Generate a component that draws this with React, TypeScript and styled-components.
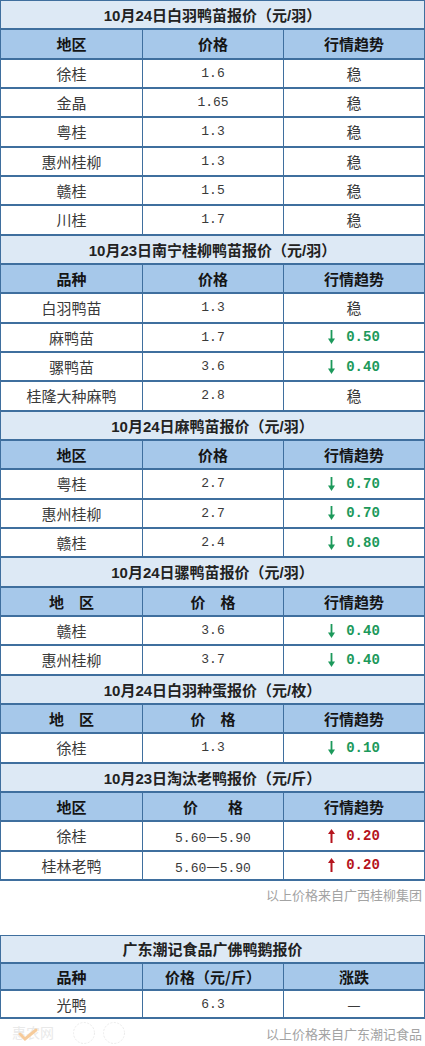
import React from 'react';
import styled, { createGlobalStyle } from 'styled-components';

const LINE = '#3f6f9e';

const GlobalStyle = createGlobalStyle`
  html, body {
    margin: 0;
    padding: 0;
    background: #ffffff;
  }
  body {
    font-family: "Noto Sans CJK SC", sans-serif;
    width: 425px;
  }
`;

const Page = styled.div`
  width: 425px;
  display: flex;
  flex-direction: column;
`;

const Table = styled.div<{ $rowH: number }>`
  --row-h: ${p => p.$rowH}px;
  width: 425px;
  box-sizing: border-box;
  border-top: 1px solid ${LINE};
  border-left: 1px solid ${LINE};
  border-right: 1px solid ${LINE};
`;

const TitleRow = styled.div`
  height: var(--row-h);
  box-sizing: border-box;
  border-bottom: 2px solid ${LINE};
  background: #dde9f5;
  display: flex;
  align-items: center;
  justify-content: center;
  font-family: "Liberation Sans", "Noto Sans CJK SC", sans-serif;
  font-weight: 700;
  font-size: 15px;
  color: #222;
`;

const Row = styled.div<{ head?: boolean }>`
  height: var(--row-h);
  box-sizing: border-box;
  border-bottom: 2px solid ${LINE};
  display: grid;
  grid-template-columns: 1fr 1fr 1fr;
  background: ${p => (p.head ? '#a6c8ea' : '#ffffff')};
  font-weight: ${p => (p.head ? 700 : 400)};
  color: ${p => (p.head ? '#151515' : '#3a3a3a')};
`;

const Cell = styled.div`
  display: flex;
  align-items: center;
  justify-content: center;
  font-size: 15px;
  white-space: pre;
  & + & {
    border-left: 1px solid ${LINE};
  }
`;

const Num = styled.span`
  font-family: "Liberation Mono", monospace;
  font-size: 13px;
`;

const Dash = styled.span`
  font-family: "Noto Sans CJK SC", sans-serif;
  font-size: 15px;
`;

const Trend = styled.span<{ up?: boolean }>`
  display: inline-flex;
  align-items: center;
  gap: 11px;
  color: ${p => (p.up ? '#b5141d' : '#1c995b')};
  font-family: "Liberation Mono", monospace;
  font-weight: 700;
  font-size: 14px;
`;

const Caption = styled.div<{ tall?: boolean }>`
  height: 28px;
  display: flex;
  align-items: center;
  justify-content: space-between;
  padding-right: 3px;
  margin-bottom: ${p => (p.tall ? '26px' : '0')};
  font-size: 13px;
  color: #a3a3a3;
`;

const CaptionText = styled.span`
  margin-left: auto;
`;

const Mark = styled.div`
  display: flex;
  align-items: center;
  gap: 6px;
  padding-left: 12px;
  opacity: 0.55;
`;

type Trendy = string | { dir: 'up' | 'down'; v: string };
type Section = { title: string; head: string[]; rows: [string, React.ReactNode, Trendy][] };

const Arrow = ({ up }: { up?: boolean }) => (
  <svg width="7" height="14" viewBox="0 0 7 14">
    {up ? (
      <>
        <path d="M3.5 0 L7 5 L0 5 Z" fill="currentColor" />
        <rect x="2.5" y="4" width="2" height="10" fill="currentColor" />
      </>
    ) : (
      <>
        <rect x="2.6" y="0" width="1.8" height="10" fill="currentColor" />
        <path d="M3.5 14 L7 8.5 L0 8.5 Z" fill="currentColor" />
      </>
    )}
  </svg>
);

const range = (
  <Num>
    5.60<Dash>—</Dash>5.90
  </Num>
);

const sections: Section[] = [
  {
    title: '10月24日白羽鸭苗报价（元/羽）',
    head: ['地区', '价格', '行情趋势'],
    rows: [
      ['徐桂', '1.6', '稳'],
      ['金晶', '1.65', '稳'],
      ['粤桂', '1.3', '稳'],
      ['惠州桂柳', '1.3', '稳'],
      ['赣桂', '1.5', '稳'],
      ['川桂', '1.7', '稳'],
    ],
  },
  {
    title: '10月23日南宁桂柳鸭苗报价（元/羽）',
    head: ['品种', '价格', '行情趋势'],
    rows: [
      ['白羽鸭苗', '1.3', '稳'],
      ['麻鸭苗', '1.7', { dir: 'down', v: '0.50' }],
      ['骡鸭苗', '3.6', { dir: 'down', v: '0.40' }],
      ['桂隆大种麻鸭', '2.8', '稳'],
    ],
  },
  {
    title: '10月24日麻鸭苗报价（元/羽）',
    head: ['地区', '价格', '行情趋势'],
    rows: [
      ['粤桂', '2.7', { dir: 'down', v: '0.70' }],
      ['惠州桂柳', '2.7', { dir: 'down', v: '0.70' }],
      ['赣桂', '2.4', { dir: 'down', v: '0.80' }],
    ],
  },
  {
    title: '10月24日骡鸭苗报价（元/羽）',
    head: ['地　区', '价　格', '行情趋势'],
    rows: [
      ['赣桂', '3.6', { dir: 'down', v: '0.40' }],
      ['惠州桂柳', '3.7', { dir: 'down', v: '0.40' }],
    ],
  },
  {
    title: '10月24日白羽种蛋报价（元/枚）',
    head: ['地　区', '价　格', '行情趋势'],
    rows: [['徐桂', '1.3', { dir: 'down', v: '0.10' }]],
  },
  {
    title: '10月23日淘汰老鸭报价（元/斤）',
    head: ['地区', '价　　格', '行情趋势'],
    rows: [
      ['徐桂', range, { dir: 'up', v: '0.20' }],
      ['桂林老鸭', range, { dir: 'up', v: '0.20' }],
    ],
  },
];

const renderTrend = (t: Trendy) =>
  typeof t === 'string' ? (
    t
  ) : (
    <Trend up={t.dir === 'up'}>
      <Arrow up={t.dir === 'up'} />
      {t.v}
    </Trend>
  );

const renderPrice = (p: React.ReactNode) => (typeof p === 'string' ? <Num>{p}</Num> : p);

const Watermark = () => (
  <Mark>
    <svg width="54" height="22" viewBox="0 0 54 22">
      <text x="0" y="16" fontSize="14" fill="#d8d8d8" fontFamily="Noto Sans CJK SC, sans-serif">惠农网</text>
      <path d="M8 12 L13 17 L24 8" stroke="#f0a24a" strokeWidth="3" fill="none" strokeLinecap="round" />
    </svg>
    <svg width="24" height="24" viewBox="0 0 24 24">
      <circle cx="12" cy="12" r="10.5" stroke="#dcdcdc" strokeWidth="1" fill="none" strokeDasharray="2 1.5" />
    </svg>
    <svg width="24" height="24" viewBox="0 0 24 24">
      <circle cx="12" cy="12" r="10.5" stroke="#dcdcdc" strokeWidth="1" fill="none" strokeDasharray="2 1.5" />
    </svg>
  </Mark>
);

export default function App() {
  return (
    <Page>
      <GlobalStyle />
      <Table $rowH={29.33}>
        {sections.map(s => (
          <React.Fragment key={s.title}>
            <TitleRow>{s.title}</TitleRow>
            <Row head>
              {s.head.map(h => (
                <Cell key={h}>{h}</Cell>
              ))}
            </Row>
            {s.rows.map(r => (
              <Row key={r[0]}>
                <Cell>{r[0]}</Cell>
                <Cell>{renderPrice(r[1])}</Cell>
                <Cell>{renderTrend(r[2])}</Cell>
              </Row>
            ))}
          </React.Fragment>
        ))}
      </Table>
      <Caption tall>
        <CaptionText>以上价格来自广西桂柳集团</CaptionText>
      </Caption>
      <Table $rowH={27.8}>
        <TitleRow>广东潮记食品广佛鸭鹅报价</TitleRow>
        <Row head>
          <Cell>品种</Cell>
          <Cell>价格（元/斤）</Cell>
          <Cell>涨跌</Cell>
        </Row>
        <Row>
          <Cell>光鸭</Cell>
          <Cell>
            <Num>6.3</Num>
          </Cell>
          <Cell>—</Cell>
        </Row>
      </Table>
      <Caption>
        <Watermark />
        <CaptionText>以上价格来自广东潮记食品</CaptionText>
      </Caption>
    </Page>
  );
}
